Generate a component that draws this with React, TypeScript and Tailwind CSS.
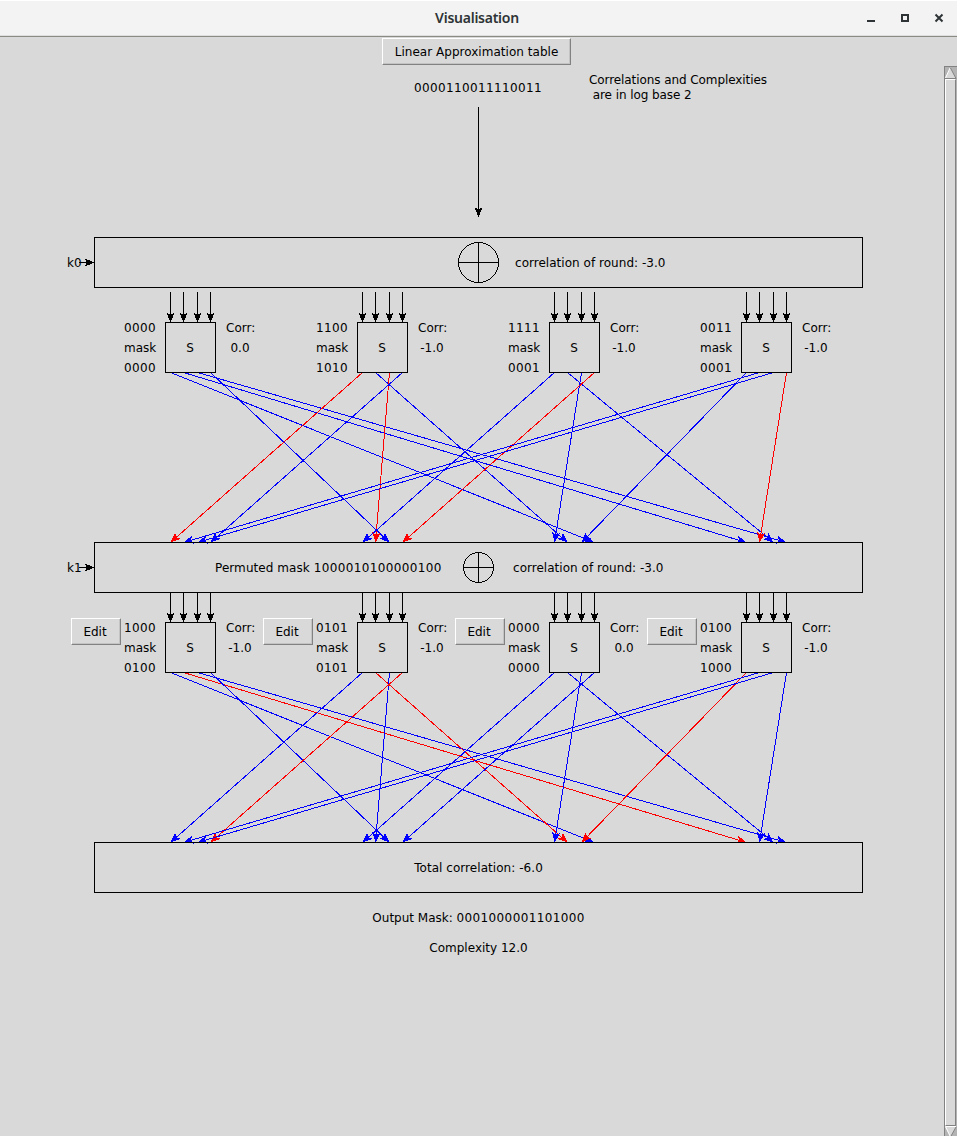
import React from "react";

const OFFSETS = [170, 183, 197, 210];
const port = (n: number) => OFFSETS[n % 4] + 192 * Math.floor(n / 4);
const PERMUTATION = [11, 12, 15, 6, 0, 9, 5, 3, 4, 14, 8, 7, 10, 1, 2, 13];

type Box = { input: string; output: string; corr: string };

const ROUND_0: Box[] = [
  { input: "0000", output: "0000", corr: "0.0" },
  { input: "1100", output: "1010", corr: "-1.0" },
  { input: "1111", output: "0001", corr: "-1.0" },
  { input: "0011", output: "0001", corr: "-1.0" },
];

const ROUND_1: Box[] = [
  { input: "1000", output: "0100", corr: "-1.0" },
  { input: "0101", output: "0101", corr: "-1.0" },
  { input: "0000", output: "0000", corr: "0.0" },
  { input: "0100", output: "1000", corr: "-1.0" },
];

function Arrow({ x1, y1, x2, y2, color = "#000" }: { x1: number; y1: number; x2: number; y2: number; color?: string }) {
  const len = Math.hypot(x2 - x1, y2 - y1);
  const ux = (x2 - x1) / len;
  const uy = (y2 - y1) / len;
  const at = (back: number, side: number) =>
    `${(x2 - ux * back - uy * side).toFixed(2)},${(y2 - uy * back + ux * side).toFixed(2)}`;
  return (
    <g stroke={color} fill={color}>
      <line x1={x1} y1={y1} x2={x2 - ux * 3} y2={y2 - uy * 3} />
      <polygon stroke="none" points={`${at(0, 0)} ${at(10, 4.1)} ${at(8, 0)} ${at(10, -4.1)}`} />
    </g>
  );
}

function RoundWires({ boxes, from, top, to }: { boxes: Box[]; from: number; top: number; to: number }) {
  return (
    <g>
      {PERMUTATION.map((_, i) => (
        <Arrow key={i} x1={port(i) + 0.5} y1={from} x2={port(i) + 0.5} y2={top + 0.5} />
      ))}
      {PERMUTATION.map((target, i) => (
        <Arrow
          key={i}
          x1={port(i) + 0.5}
          y1={top + 50.5}
          x2={port(target) + 0.5}
          y2={to + 0.5}
          color={boxes[Math.floor(i / 4)].output[i % 4] === "1" ? "#ff0000" : "#0000ff"}
        />
      ))}
    </g>
  );
}

function Wires() {
  return (
    <svg
      className="absolute inset-0 -z-10"
      width="944"
      height="1070"
      viewBox="0 66 944 1070"
      shapeRendering="crispEdges"
      fill="none"
    >
      <Arrow x1={478.5} y1={107} x2={478.5} y2={217} />
      <Arrow x1={79} y1={262.5} x2={94.5} y2={262.5} />
      <Arrow x1={79} y1={567.5} x2={94.5} y2={567.5} />
      <RoundWires boxes={ROUND_0} from={292} top={322} to={542} />
      <RoundWires boxes={ROUND_1} from={592} top={622} to={842} />
    </svg>
  );
}

function Xor({ size }: { size: number }) {
  const c = size / 2;
  return (
    <svg width={size} height={size} className="shrink-0" shapeRendering="crispEdges" fill="none" stroke="#000">
      <circle cx={c} cy={c} r={c - 0.5} />
      <path d={`M0 ${c}H${size}M${c} 0V${size}`} />
    </svg>
  );
}

function Bits({ children }: { children: string }) {
  return <span className="tracking-[0.37px]">{children}</span>;
}

function Button({ className, children }: { className: string; children: string }) {
  return (
    <button
      className={
        "flex h-[27px] shrink-0 items-center justify-center border border-t-white border-l-white border-r-[#828282] border-b-[#828282] bg-[#d9d9d9] shadow-[inset_-1px_-1px_0_#c3c3c3] " +
        className
      }
    >
      {children}
    </button>
  );
}

function Bar({ name = "", className, children }: { name?: string; className: string; children: React.ReactNode }) {
  return (
    <div className="flex h-[51px] shrink-0 items-center pl-[67px] leading-4">
      <div className="h-4 w-[27px]">{name}</div>
      <div className={"flex h-[51px] w-[769px] items-center whitespace-pre border border-black " + className}>
        {children}
      </div>
    </div>
  );
}

function SBoxes({ boxes, editable = false, className }: { boxes: Box[]; editable?: boolean; className: string }) {
  return (
    <div className={"mb-[169px] grid h-[51px] shrink-0 grid-cols-[repeat(4,192px)] pl-[71px] leading-4 " + className}>
      {boxes.map((b, i) => (
        <div key={i} className="flex items-start">
          <div className="-mt-1 w-[53px]">{editable && <Button className="w-[50px] pr-[2px]">Edit</Button>}</div>
          <div className="-mt-[2px] flex w-[41px] flex-col gap-1">
            <Bits>{b.input}</Bits>
            <span>mask</span>
            <Bits>{b.output}</Bits>
          </div>
          <div className="flex h-[51px] w-[51px] items-center justify-center border border-black pr-[1px]">S</div>
          <div className="-mt-[2px] ml-[10px] flex w-[29px] flex-col gap-1 whitespace-nowrap">
            <span>Corr:</span>
            <span className="pr-[1px] text-center">{b.corr}</span>
          </div>
        </div>
      ))}
    </div>
  );
}

function Diagram() {
  return (
    <main className="relative isolate flex w-[944px] flex-col">
      <Wires />
      <div className="flex h-[171px] shrink-0 items-start pl-[414px] pt-[7px]">
        <div className="mt-[7px] w-[175px] leading-4">
          <Bits>0000110011110011</Bits>
        </div>
        <p className="whitespace-pre leading-[15px] tracking-[-0.08px]">
          {"Correlations and Complexities\n are in log base 2"}
        </p>
      </div>
      <Bar name="k0" className="gap-4 pl-[363px]">
        <Xor size={41} />
        <span className="h-4 tracking-[0.03px]">correlation of round: -3.0</span>
      </Bar>
      <SBoxes boxes={ROUND_0} className="mt-[34px]" />
      <Bar name="k1" className="pl-[120px]">
        <span className="h-4 w-[248px] tracking-[0.07px]">
          Permuted mask <Bits>1000010100000100</Bits>
        </span>
        <Xor size={31} />
        <span className="ml-[19px] h-4 tracking-[0.03px]">correlation of round: -3.0</span>
      </Bar>
      <SBoxes boxes={ROUND_1} editable className="mt-[29px]" />
      <Bar className="justify-center">
        <span className="h-4 tracking-[0.05px]">Total correlation: -6.0</span>
      </Bar>
      <div className="flex flex-col items-center gap-[14px] pl-[13px] pt-[17px] leading-4">
        <span>
          Output Mask: <Bits>0001000001101000</Bits>
        </span>
        <span>Complexity 12.0</span>
      </div>
    </main>
  );
}

function Scrollbar() {
  return (
    <div className="flex w-[13px] flex-col border-l border-t border-[#828282] bg-[#b3b3b3]">
      <svg width="12" height="12" viewBox="0 0 12 12" className="shrink-0">
        <path d="M5.5 1L0 11H11Z" fill="#d9d9d9" />
        <path d="M5 1L0.5 11" stroke="#fff" fill="none" />
        <path d="M0 11.5H11L5.5 1" stroke="#828282" fill="none" />
      </svg>
      <div className="w-[11px] flex-1 border border-t-white border-l-white border-r-[#828282] border-b-[#828282] bg-[#d9d9d9]" />
      <svg width="12" height="10" viewBox="0 0 12 10" className="shrink-0">
        <path d="M0 1H11L5.5 11Z" fill="#d9d9d9" />
        <path d="M11 0.5H0.5L5.5 11" stroke="#fff" fill="none" />
        <path d="M5.5 11L11 1" stroke="#828282" fill="none" />
      </svg>
    </div>
  );
}

export default function App() {
  return (
    <div className="flex h-[1136px] w-[957px] flex-col overflow-hidden bg-[#d9d9d9] font-['DejaVu_Sans',sans-serif] text-[12px] text-black">
      <header className="grid h-[37px] shrink-0 grid-cols-[100px_1fr_100px] items-start border-b border-[#8b8b84] border-t border-t-white bg-[#f3f3f3] shadow-[inset_0_-1px_0_#dedede]">
        <h1 className="col-start-2 pr-[3px] pt-[6px] text-center font-['Noto_Sans',sans-serif] text-[14px] font-semibold leading-[21px] tracking-[-0.25px] text-[#2e3436]">
          Visualisation
        </h1>
        <svg width="100" height="34" fill="none" stroke="#2e3436" strokeWidth="2">
          <path d="M10 20H18" />
          <rect x="45" y="14" width="6" height="6" />
          <path d="M78.5 13.5L85.5 20.5M85.5 13.5L78.5 20.5" />
        </svg>
      </header>
      <div className="flex h-[29px] shrink-0 items-start justify-center pr-1 pt-[1px]">
        <Button className="w-[189px] tracking-[0.03px]">Linear Approximation table</Button>
      </div>
      <div className="flex min-h-0 flex-1">
        <Diagram />
        <Scrollbar />
      </div>
    </div>
  );
}
